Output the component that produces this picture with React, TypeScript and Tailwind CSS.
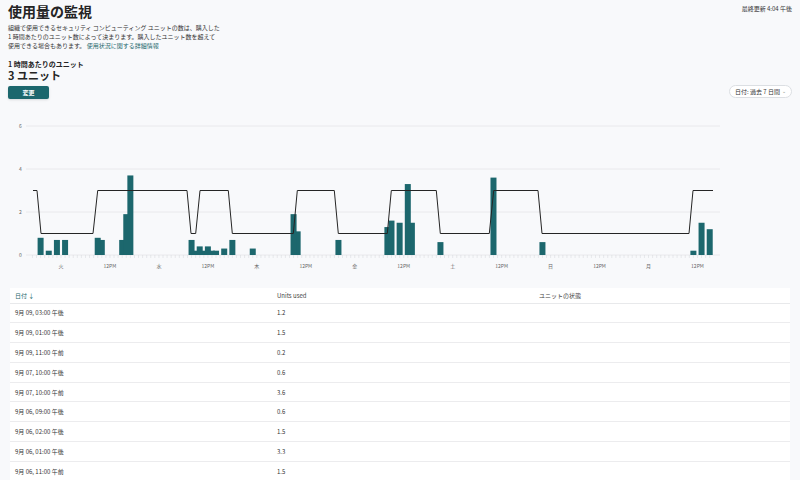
import React from 'react';

const X0 = 61; // 火 00:00
const PX = 4.08; // px per hour
const Y0 = 255;
const UNIT = 21.5;

const xAt = (day: number, hour: number) => X0 + (day * 24 + hour) * PX;
const yAt = (v: number) => Y0 - v * UNIT;

// [day (0 = 火), hour, units]
const usage: [number, number, number][] = [
  [0, -5, 0.8], [0, -3, 0.2], [0, -1, 0.7], [0, 1, 0.7], [0, 9, 0.8], [0, 10, 0.7], [0, 15, 0.7], [0, 16, 1.9], [0, 17, 3.7],
  [1, 8, 0.7], [1, 9, 0.2], [1, 10, 0.4], [1, 11, 0.2], [1, 12, 0.4], [1, 13, 0.2], [1, 14, 0.2], [1, 16, 0.3], [1, 18, 0.7], [1, 23, 0.3],
  [2, 9, 1.9], [2, 10, 1.1], [2, 20, 0.7],
  [3, 8, 1.3], [3, 9, 1.6], [3, 11, 1.5], [3, 13, 3.3], [3, 14, 1.5], [3, 21, 0.6],
  [4, 10, 3.6], [4, 22, 0.6],
  [6, 11, 0.2], [6, 13, 1.5], [6, 15, 1.2],
];

const capacity: [number, number][] = [
  [33, 3], [37, 3], [41, 1], [93, 1], [97.7, 3], [187, 3], [191, 1], [195.7, 1], [200, 3], [228.3, 3], [232.3, 1],
  [293.3, 1], [297.3, 3], [334.3, 3], [338.3, 1], [387.3, 1], [391.3, 3], [436.3, 3], [440.3, 1], [489.3, 1],
  [493.7, 3], [538, 3], [542, 1], [689, 1], [693, 3], [713, 3],
];

const xLabels = ['火', '12PM', '水', '12PM', '木', '12PM', '金', '12PM', '土', '12PM', '日', '12PM', '月', '12PM'];

const rows = [
  ['9月 09, 03:00 午後', '1.2'],
  ['9月 09, 01:00 午後', '1.5'],
  ['9月 09, 11:00 午前', '0.2'],
  ['9月 07, 10:00 午後', '0.6'],
  ['9月 07, 10:00 午前', '3.6'],
  ['9月 06, 09:00 午後', '0.6'],
  ['9月 06, 02:00 午後', '1.5'],
  ['9月 06, 01:00 午後', '3.3'],
  ['9月 06, 11:00 午前', '1.5'],
];

function UsageChart() {
  const ticks: number[] = [];
  for (let k = -7; k <= 159; k++) ticks.push(X0 + k * PX);
  const bars = [...usage].sort((a, b) => a[2] - b[2]);
  const line = capacity.map(([x, v], i) => `${i ? 'L' : 'M'}${x} ${yAt(v)}`).join(' ');

  return (
    <svg width="800" height="170" viewBox="0 110 800 170" className="block">
      {[0, 2, 4, 6].map(v => (
        <g key={v}>
          <line x1="26" x2="720" y1={yAt(v)} y2={yAt(v)} stroke="#e4e6ea" strokeWidth="0.8" />
          <text x="20.5" y={yAt(v) + 1.8} fontSize="5" fill="#666" textAnchor="middle">{v}</text>
        </g>
      ))}
      {ticks.map(x => (
        <line key={x} x1={x} x2={x} y1={255} y2={258} stroke="#d4d6da" strokeWidth="0.5" />
      ))}
      {xLabels.map((l, i) => (
        <text key={i} x={X0 + i * 12 * PX} y="267.5" fontSize="5" fill="#666" textAnchor="middle">{l}</text>
      ))}
      {bars.map(([d, h, v]) => (
        <rect key={`${d}-${h}`} x={xAt(d, h) - 3} y={yAt(v)} width="6" height={v * UNIT} fill="#1c676d" />
      ))}
      <path d={line} fill="none" stroke="#252525" strokeWidth="1" />
    </svg>
  );
}

export default function App() {
  return (
    <div className="w-[800px] h-[480px] overflow-hidden bg-[#f8f9fb] text-[#242424]" style={{ fontFamily: '"Noto Sans CJK JP", "Noto Sans", sans-serif' }}>
      <header className="flex justify-between px-2 pt-[1px]">
        <div>
          <h1 className="text-[14px] leading-[20px] font-bold">使用量の監視</h1>
          <p className="mt-[1.5px] text-[6px] leading-[9px] text-[#333]">
            組織で使用できるセキュリティ コンピューティング ユニットの数は、購入した<br />
            1 時間あたりのユニット数によって決まります。購入したユニット数を超えて<br />
            使用できる場合もあります。 <span className="text-[#1c676d]">使用状況に関する詳細情報</span>
          </p>
        </div>
        <div className="pt-[3px] text-[6px] leading-[9px] text-[#333]">最終更新 4:04 午後</div>
      </header>

      <section className="px-2 mt-[9px] flex justify-between items-end">
        <div>
          <div className="text-[7px] leading-[10px] font-semibold">1&nbsp;時間あたりのユニット</div>
          <div className="text-[11px] leading-[13px] font-bold">3 ユニット</div>
          <button className="block mt-[4px] w-[41px] h-[13px] rounded-[2px] bg-[#1c676d] text-white text-[6px] leading-[13px] font-semibold shadow-sm">変更</button>
        </div>
        <div className="mb-[1px] h-[13px] px-[5px] rounded-full bg-white border border-[#dcdfe3] flex items-center gap-[2px] text-[6px] text-[#333]">
          日付: 過去 7 日間 <span className="text-[5px] text-[#888]">⌄</span>
        </div>
      </section>

      <div className="mt-[11px]">
        <UsageChart />
      </div>

      <div className="mx-[10px] mt-[8px] bg-white text-[6px]">
        <div className="grid grid-cols-[262px_262px_1fr] h-[16px] items-center border-b border-[#e8e9eb] px-[5px]">
          <span className="text-[#1c676d]">日付 ↓</span>
          <span className="text-[#444]">Units used</span>
          <span className="text-[#444]">ユニットの状態</span>
        </div>
        {rows.map(([d, v]) => (
          <div key={d} className="grid grid-cols-[262px_262px_1fr] h-[19.8px] items-center border-b border-[#ececee] px-[5px] text-[#333]">
            <span>{d}</span>
            <span>{v}</span>
            <span />
          </div>
        ))}
      </div>
    </div>
  );
}
